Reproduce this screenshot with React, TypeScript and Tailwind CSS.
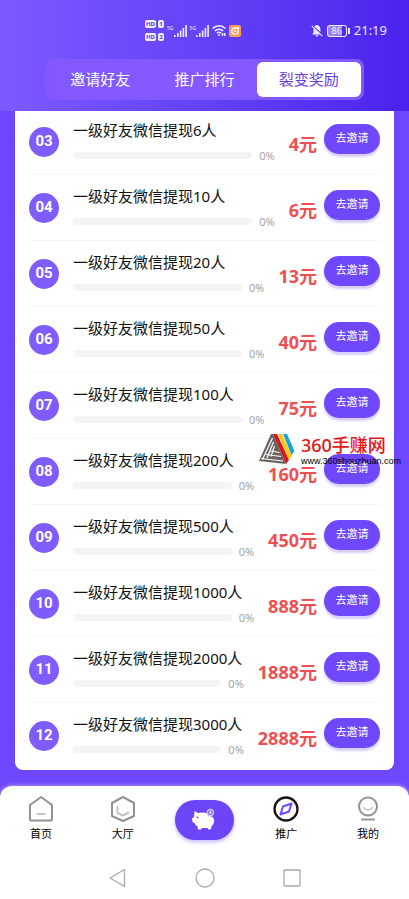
import type { ReactNode } from 'react'

type Reward = {
  level: string
  people: number
  amount: number
  progress: number
}

const rewards: Reward[] = [
  { level: '03', people: 6, amount: 4, progress: 0 },
  { level: '04', people: 10, amount: 6, progress: 0 },
  { level: '05', people: 20, amount: 13, progress: 0 },
  { level: '06', people: 50, amount: 40, progress: 0 },
  { level: '07', people: 100, amount: 75, progress: 0 },
  { level: '08', people: 200, amount: 160, progress: 0 },
  { level: '09', people: 500, amount: 450, progress: 0 },
  { level: '10', people: 1000, amount: 888, progress: 0 },
  { level: '11', people: 2000, amount: 1888, progress: 0 },
  { level: '12', people: 3000, amount: 2888, progress: 0 },
]

const tabs = ['邀请好友', '推广排行', '裂变奖励']

const SimBadge = ({ sim }: { sim: string }) => (
  <div className="flex gap-[2px] text-[6px] leading-[8px] font-bold text-[#5b38ea]">
    <span className="w-[11px] rounded-[2px] bg-white/90 text-center">HD</span>
    <span className="w-[6px] rounded-[2px] bg-white/90 text-center">{sim}</span>
  </div>
)

const Signal = () => (
  <div className="flex">
    <span className="text-[5px] leading-[8px]">5G</span>
    <svg className="h-[14px] w-[13px]" viewBox="0 0 13 14" fill="currentColor" aria-hidden="true">
      <path d="M0 11h1.6v2H0zM3 9h1.6v4H3zM5.800 6.500h1.600v6.500H5.800zM8.600 4h1.600v9H8.600zM11.300 1h1.600v12h-1.600z" />
    </svg>
  </div>
)

const StatusBar = () => (
  <div className="flex h-[59px] items-center justify-between pt-[2px] pr-[22px] pl-[145px] text-white/90">
    <div className="flex items-center gap-[3px]">
      <div className="flex flex-col gap-[5px]">
        <SimBadge sim="1" />
        <SimBadge sim="2" />
      </div>
      <Signal />
      <Signal />
      <svg className="h-[13px] w-[14px]" viewBox="0 0 14 13" fill="none" stroke="currentColor" strokeWidth="1.500" aria-hidden="true">
        <path d="M.6 4.500C4.200.8 9.800.8 13.400 4.500M2.800 7c2.400-2.500 6-2.500 8.400 0M5 9.300c1.300-1.300 2.700-1.300 4 0" />
        <path d="M6 11h2M10.500 9v3M12.700 9v3" />
      </svg>
      <svg className="h-3 w-3" viewBox="0 0 12 12" fill="none" aria-hidden="true">
        <rect width="12" height="12" rx="2" fill="#fb9b5a" />
        <circle cx="6" cy="6" r="3.200" stroke="#fff" strokeWidth="1.300" />
        <circle cx="6" cy="6" r="1" fill="#fff" />
        <path d="M8 2.500h1.500V4" stroke="#fff" />
      </svg>
    </div>
    <div className="flex items-center gap-1">
      <svg className="h-3 w-3" viewBox="0 0 12 12" fill="currentColor" aria-hidden="true">
        <path d="M6 0c2.200.5 3.400 2 3.400 4.300v2.600L3.300 1.500C4 .8 5 .3 6 0zM2.500 3.200l6.800 6.300H1.200c.8-1 1.300-1.700 1.300-3zM4.500 10.300h3c-.3 1.600-2.700 1.600-3 0z" />
        <path d="M.8.800l10.600 10.400" stroke="currentColor" strokeWidth="1.100" />
      </svg>
      <div className="flex items-center gap-px">
        <span className="w-5 rounded-[3px] border border-white/90 bg-linear-to-r from-white/40 from-80% to-transparent to-80% text-center text-[9px] leading-[10px]">86</span>
        <span className="h-[6px] w-[2px] bg-white/90" />
      </div>
      <span className="text-[13px]">21:19</span>
    </div>
  </div>
)

const RewardRow = ({ level, people, amount, progress }: Reward) => (
  <li className="mx-[14px] flex h-[66px] items-center border-b border-[#f6f6f8] last:border-transparent">
    <span className="flex size-[30px] shrink-0 items-center justify-center rounded-full bg-[#7f5cff] font-['Roboto'] text-[15px] font-bold text-white">
      {level}
    </span>
    <div className="ml-[14px] flex-1">
      <h2 className="text-[15px] leading-5 whitespace-nowrap text-[#111]">一级好友微信提现{people}人</h2>
      <div className="mt-2 flex items-center gap-[7px]">
        <div className="h-[7px] flex-1 rounded-full bg-[#f4f4f5]">
          <div className="h-full rounded-full bg-[#7f5cff]" style={{ width: `${progress}%` }} />
        </div>
        <span className="text-[11px] leading-4 text-[#a3a3a3]">{progress}%</span>
      </div>
    </div>
    <span className="mt-1 ml-[14px] text-lg leading-6 font-bold text-[#ee5051]">{amount}元</span>
    <button className="mb-[6px] ml-[7px] h-[30px] w-14 rounded-full bg-[#7048fb] text-[11px] text-white shadow-[0_3px_2px_#d9ceff]">
      去邀请
    </button>
  </li>
)

const Watermark = () => (
  <div className="pointer-events-none absolute top-[324px] -right-[7px] flex items-start gap-[6px]">
    <svg className="h-8 w-9" viewBox="0 0 36 32" aria-hidden="true">
      <path d="M12 1h2l13 30L0 28z" fill="#6b625f" />
      <path d="M13.500 5L3.500 26.500M14.500 9L8 25M15.500 13L12 23.500M2 25.500l22 2.500M7 21.500l15 2M11.500 18l9 1.500" stroke="#fff" strokeWidth="1.200" />
      <path d="M14 1h4l12 26-3 4z" fill="#d9141b" />
      <path d="M19 1h4l10 22-3 4z" fill="#fbc816" />
      <path d="M24 1h4l7.500 17-3 4z" fill="#17a5d8" />
    </svg>
    <div>
      <p className="text-lg leading-6 font-medium text-[#e5141b]">360手赚网</p>
      <p className="font-['Liberation_Sans'] text-[9px] leading-2 text-black">www.360shouzhuan.com</p>
    </div>
  </div>
)

const NavItem = ({ label, children }: { label: string; children: ReactNode }) => (
  <button className="flex flex-col items-center gap-1 text-[11px] leading-4 text-black">
    <svg className="h-[27px] w-7" viewBox="0 0 28 27" fill="none" strokeWidth="2" strokeLinejoin="round" strokeLinecap="round" aria-hidden="true">
      {children}
    </svg>
    {label}
  </button>
)

const BottomNav = () => (
  <nav className="grid grid-cols-5 items-start pt-[9px]">
    <NavItem label="首页">
      <path d="M14 2L25 10v14.500a1 1 0 0 1-1 1H4a1 1 0 0 1-1-1V10z" stroke="#929295" />
      <path d="M10.500 19h7" stroke="#c4c4c6" />
    </NavItem>
    <NavItem label="大厅">
      <path d="M14 2l11 6v13l-11 5-11-5V8z" stroke="#929295" />
      <path d="M8.500 12v6l5.500 2.500 5.500-3" stroke="#c4c4c6" />
    </NavItem>
    <button aria-label="存钱罐" className="mt-[5px] flex h-10 w-[59px] items-center justify-center justify-self-center rounded-full bg-[#6c45f8] shadow-[0_2px_4px_#c3b4ff]">
      <svg className="h-6 w-6" viewBox="0 0 24 24" fill="#fff" aria-hidden="true">
        <path d="M2.500 3l3.500 2c3-.8 6-.8 8.500 0 1 2.500 3 3.500 5.500 3.500 1.800 1.500 2.300 3.500 2 5.500-.3 2-1.300 3.300-2.500 4.300l-.5 3-2.500.2-1-1.500H10l-1 1.500H6l-.5-3c-1.500-1-2.500-2-3-3.500L.5 14 0 10.500 2 9z" />
        <circle cx="5.500" cy="9.500" r="1" fill="#6c45f8" />
        <circle cx="18.300" cy="4.500" r="3.200" fill="#8d70fa" stroke="#d3c8ff" strokeWidth="1.200" />
        <path d="M18.300 3v3" stroke="#fff" strokeWidth="1.200" />
      </svg>
    </button>
    <NavItem label="推广">
      <circle cx="14" cy="14" r="11.500" stroke="#151515" strokeWidth="2.300" />
      <path d="M19.500 8.500l-2.500 8-8.500 3 2.500-8z" stroke="#7048fb" />
    </NavItem>
    <NavItem label="我的">
      <circle cx="14" cy="11.500" r="9" stroke="#929295" />
      <path d="M9.500 12.500c2 3 7 3 9 0" stroke="#c4c4c6" strokeWidth="1.500" />
      <path d="M8 24.500h12" stroke="#929295" />
    </NavItem>
  </nav>
)

const SystemNav = () => (
  <div className="mt-6 flex justify-center gap-[63px] text-[#a9a9ab]">
    <button aria-label="返回">
      <svg className="size-6" viewBox="0 0 24 24" fill="none" stroke="currentColor" strokeWidth="1.300" strokeLinejoin="round" aria-hidden="true">
        <path d="M18.500 3.500v17L4 12z" />
      </svg>
    </button>
    <button aria-label="主屏幕">
      <svg className="size-6" viewBox="0 0 24 24" fill="none" stroke="currentColor" strokeWidth="1.300" aria-hidden="true">
        <circle cx="12" cy="12" r="9" />
      </svg>
    </button>
    <button aria-label="最近任务">
      <svg className="size-6" viewBox="0 0 24 24" fill="none" stroke="currentColor" strokeWidth="1.300" aria-hidden="true">
        <rect x="4" y="4" width="16" height="16" rx="1" />
      </svg>
    </button>
  </div>
)

export default function App() {
  return (
    <div className="flex min-h-screen flex-col bg-[#6f47ff] font-['Noto_Sans','Noto_Sans_CJK_SC',sans-serif]">
      <header className="relative z-10 bg-linear-to-r from-[#7f59ff] to-[#4b20ed] pb-[11px]">
        <StatusBar />
        <div role="tablist" className="mx-[45px] grid h-[41px] grid-cols-3 rounded-lg bg-[#8358ff] p-[3px]">
          {tabs.map((tab, i) => (
            <button
              key={tab}
              role="tab"
              aria-selected={i === 2}
              className={i === 2 ? 'rounded-md bg-white text-[15px] text-[#6540e0]' : 'text-[15px] text-white'}
            >
              {tab}
            </button>
          ))}
        </div>
      </header>

      <main className="relative mx-[15px] -mt-[2px] rounded-b-lg bg-white pb-px">
        <ul>
          {rewards.map((reward) => (
            <RewardRow key={reward.level} {...reward} />
          ))}
        </ul>
        <Watermark />
      </main>

      <footer className="mt-4 flex-1 rounded-t-xl bg-white pb-2 shadow-[0_0_5px_#ffffff90]">
        <BottomNav />
        <SystemNav />
      </footer>
    </div>
  )
}
